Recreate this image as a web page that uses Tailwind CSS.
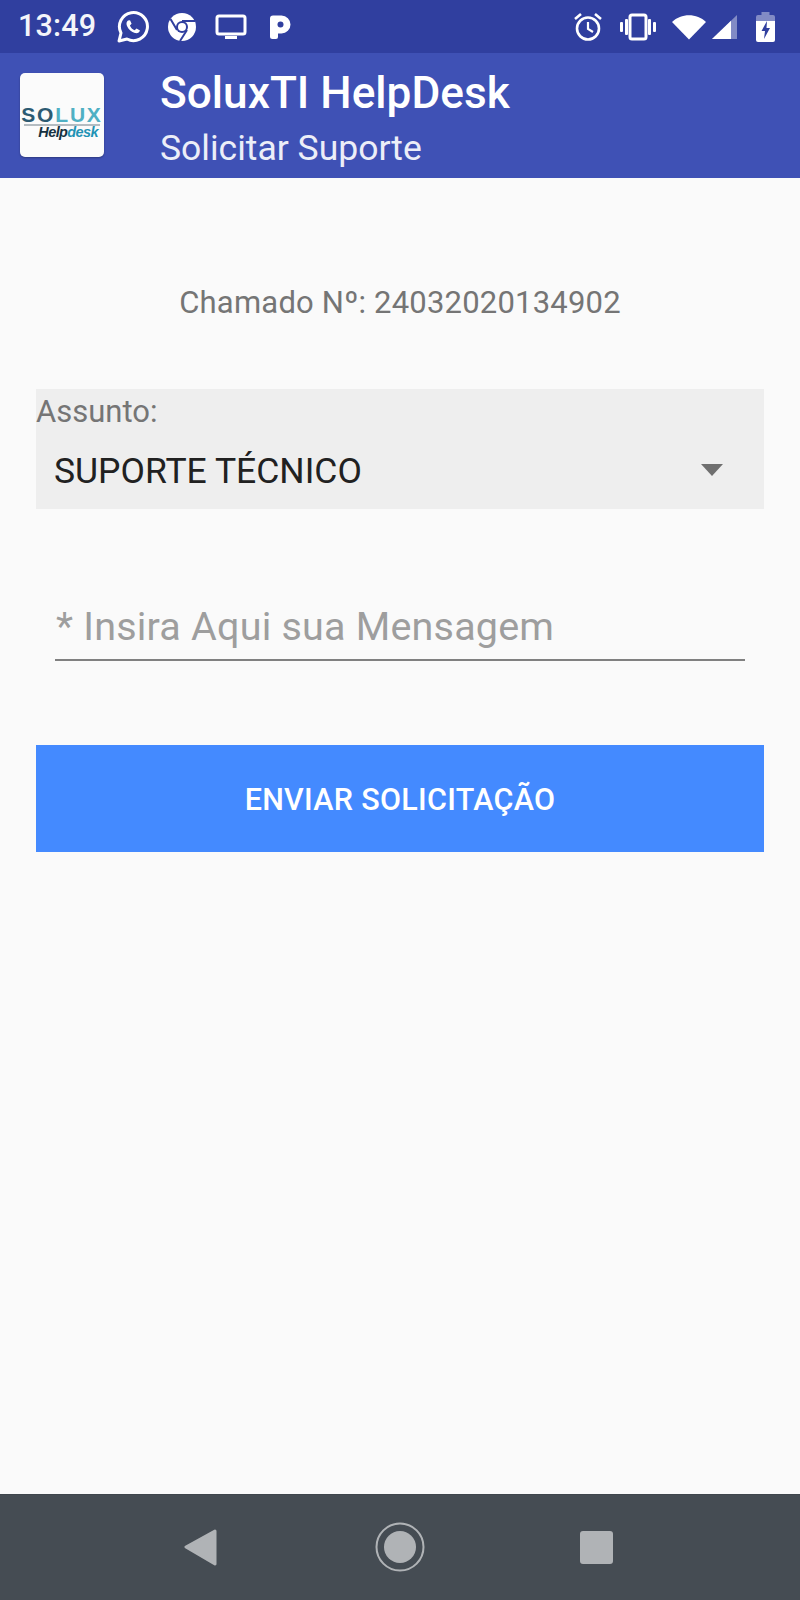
<!DOCTYPE html>
<html lang="pt">
<head>
<meta charset="utf-8">
<title>SoluxTI HelpDesk</title>
<script src="https://cdn.jsdelivr.net/npm/@tailwindcss/browser@4"></script>
</head>
<body class="m-0 bg-[#fafafa]">
<div class="w-[800px] h-[1600px] flex flex-col overflow-hidden font-['Roboto',sans-serif] bg-[#fafafa]">

  <!-- status bar -->
  <div class="h-[53px] shrink-0 bg-[#303f9f] flex items-center pl-[18px] pr-[25px] text-white">
    <span class="text-[30.5px] leading-none font-medium w-[79px] tracking-[0.2px] text-[#f4f5fa]">13:49</span>
    <svg class="ml-[20px]" width="32" height="32" viewBox="0 0 32 32" fill="none">
      <path d="M2 30l2-8A14 14 0 1 1 10 28z" stroke="#fff" stroke-width="3" stroke-linejoin="round"/>
      <path d="M11 9.500c-1.500 1-2 3-1 5.500 1.500 3.500 4.500 6 8 7 2.500.5 4.500-.5 5-2.500l-3.500-2-1.800 1.800c-2.200-.8-4-2.600-4.800-4.800l1.700-1.700-1.600-3.500z" fill="#fff"/>
    </svg>
    <svg class="ml-[18px]" width="30" height="30" viewBox="0 0 30 30">
      <circle cx="15" cy="15" r="14" fill="#fff"/>
      <circle cx="15" cy="15" r="6" fill="#303f9f"/>
      <circle cx="15" cy="15" r="4" fill="#fff"/>
      <path d="M15 9H28M10 18L3.500 7M20 18L13 29" stroke="#303f9f" stroke-width="2" fill="none"/>
    </svg>
    <svg class="ml-[18px]" width="32" height="26" viewBox="0 0 32 26" fill="none">
      <rect x="2" y="2" width="28" height="18" rx="2" stroke="#fff" stroke-width="3"/>
      <rect x="10" y="22" width="12" height="3" fill="#fff"/>
    </svg>
    <svg class="ml-[21px]" width="24" height="26" viewBox="0 0 24 26">
      <path d="M2 4.500A3 3 0 0 1 5 1.500h8.500a9 9 0 0 1 0 18H10V23a2 2 0 0 1-2 2H4.500A2.500 2.500 0 0 1 2 22.500z" fill="#fff"/>
      <circle cx="12.500" cy="10.500" r="3" fill="#303f9f"/>
    </svg>
    <div class="flex-1"></div>
    <svg width="30" height="30" viewBox="0 0 30 30" fill="none">
      <circle cx="15" cy="16.500" r="11" stroke="#fff" stroke-width="2.600"/>
      <path d="M15 10v7l5 3" stroke="#fff" stroke-width="2.200"/>
      <path d="M2 7l6-5M28 7l-6-5" stroke="#fff" stroke-width="2.600"/>
    </svg>
    <svg class="ml-[16px]" width="38" height="28" viewBox="0 0 38 28" fill="none">
      <rect x="11" y="2" width="16" height="24" rx="2" stroke="#fff" stroke-width="3"/>
      <rect x="1" y="9" width="3" height="10" rx="1" fill="#fff"/>
      <rect x="6" y="6" width="3" height="16" rx="1" fill="#fff"/>
      <rect x="29" y="6" width="3" height="16" rx="1" fill="#fff"/>
      <rect x="34" y="9" width="3" height="10" rx="1" fill="#fff"/>
    </svg>
    <svg class="ml-[14px]" width="36" height="26" viewBox="0 0 36 26">
      <path d="M18 25.500L1 8C10-1 26-1 35 8z" fill="#fff"/>
    </svg>
    <svg class="ml-[4px]" width="27" height="26" viewBox="0 0 27 26">
      <path d="M1 25L26 1V25z" fill="#fff" fill-opacity="0.4"/>
      <path d="M1 25L20 6.800V25z" fill="#fff"/>
    </svg>
    <svg class="ml-[18px]" width="19" height="30" viewBox="0 0 19 30">
      <path d="M5.500 0h8v3h3.500a2 2 0 0 1 2 2v6H0V5a2 2 0 0 1 2-2h3.500z" fill="#fff" fill-opacity="0.4"/>
      <path d="M0 9h19v19a2 2 0 0 1-2 2H2a2 2 0 0 1-2-2z" fill="#fff"/>
      <path d="M11 9L5.500 19h3.500L8 27l6-11h-3.500z" fill="#303f9f"/>
    </svg>
  </div>

  <!-- app bar -->
  <div class="h-[125px] shrink-0 bg-[#3f51b5] flex items-center pl-[20px]">
    <div class="w-[84px] h-[84px] rounded-[5px] bg-[#fbfbfb] shadow-[0_1px_2px_rgba(0,0,0,0.3)] flex flex-col items-center mt-[-2px] overflow-hidden">
      <span class="mt-[32px] text-[21px] leading-[19px] tracking-[1.8px] font-['Liberation_Sans',sans-serif] font-bold"><span class="text-[#2c5a72]">SO</span><span class="text-[#4fb0c4]">LUX</span></span>
      <span class="w-[76px] h-[2px] bg-[#b4bcc1]"></span>
      <span class="self-end mr-[6px] mt-[-1px] text-[14.5px] leading-[14px] italic font-bold tracking-[-0.6px] font-['Liberation_Sans',sans-serif]"><span class="text-[#16303f]">Help</span><span class="text-[#1f93b5]">desk</span></span>
    </div>
    <div class="ml-[56px] flex flex-col text-white">
      <span class="text-[44.2px] leading-[52px] font-medium mt-[6px]">SoluxTI HelpDesk</span>
      <span class="text-[35.5px] leading-[44px] text-[#eceef8] mt-[7px]">Solicitar Suporte</span>
    </div>
  </div>

  <!-- content -->
  <div class="flex-1 px-[36px] flex flex-col">
    <p class="mt-[105px] text-center text-[31px] leading-[40px] text-[#757575] tracking-[0.2px]">Chamado Nº: 24032020134902</p>

    <div class="mt-[66px] h-[120px] bg-[#eeeeee] flex flex-col">
      <span class="text-[31px] leading-[46px] text-[#757575]">Assunto:</span>
      <div class="flex items-center justify-between pl-[18px] pr-[41px] mt-[13px]">
        <span class="text-[35.5px] leading-[46px] text-[#212121]">SUPORTE TÉCNICO</span>
        <svg width="22" height="12" viewBox="0 0 22 12" class="mt-[-2px]"><path d="M0 0h22L11 12z" fill="#6f6f6f"/></svg>
      </div>
    </div>

    <div class="mt-[73px] mx-[19px] h-[79px] border-b-[2px] border-[#808080] pl-[1px] flex items-end">
      <span class="text-[39.5px] leading-[61px] pb-[2px] text-[#9e9e9e] tracking-[0.2px]">* Insira Aqui sua Mensagem</span>
    </div>

    <div class="mt-[84px] h-[107px] bg-[#448aff] flex items-center justify-center">
      <span class="text-[30.5px] font-medium text-white tracking-[0.3px] mt-[2px]">ENVIAR SOLICITAÇÃO</span>
    </div>
  </div>

  <!-- nav bar -->
  <div class="h-[106px] shrink-0 bg-[#454c53] border-t border-[#3f464d] flex items-center pl-[184px]">
    <svg width="33" height="38" viewBox="0 0 33 38" class="mr-[158px] mt-[-1px]">
      <path d="M31 3L2 19l29 17z" fill="#b0b3b6" stroke="#b0b3b6" stroke-width="3" stroke-linejoin="round"/>
    </svg>
    <svg width="50" height="50" viewBox="0 0 50 50" class="mt-[-1px]">
      <circle cx="25" cy="25" r="23.500" fill="none" stroke="#b0b3b6" stroke-width="2"/>
      <circle cx="25" cy="25" r="16" fill="#b0b3b6"/>
    </svg>
    <svg width="33" height="33" viewBox="0 0 33 33" class="ml-[155px] mt-[-1px]">
      <rect width="33" height="33" rx="3" fill="#b0b3b6"/>
    </svg>
  </div>
</div>
</body>
</html>
